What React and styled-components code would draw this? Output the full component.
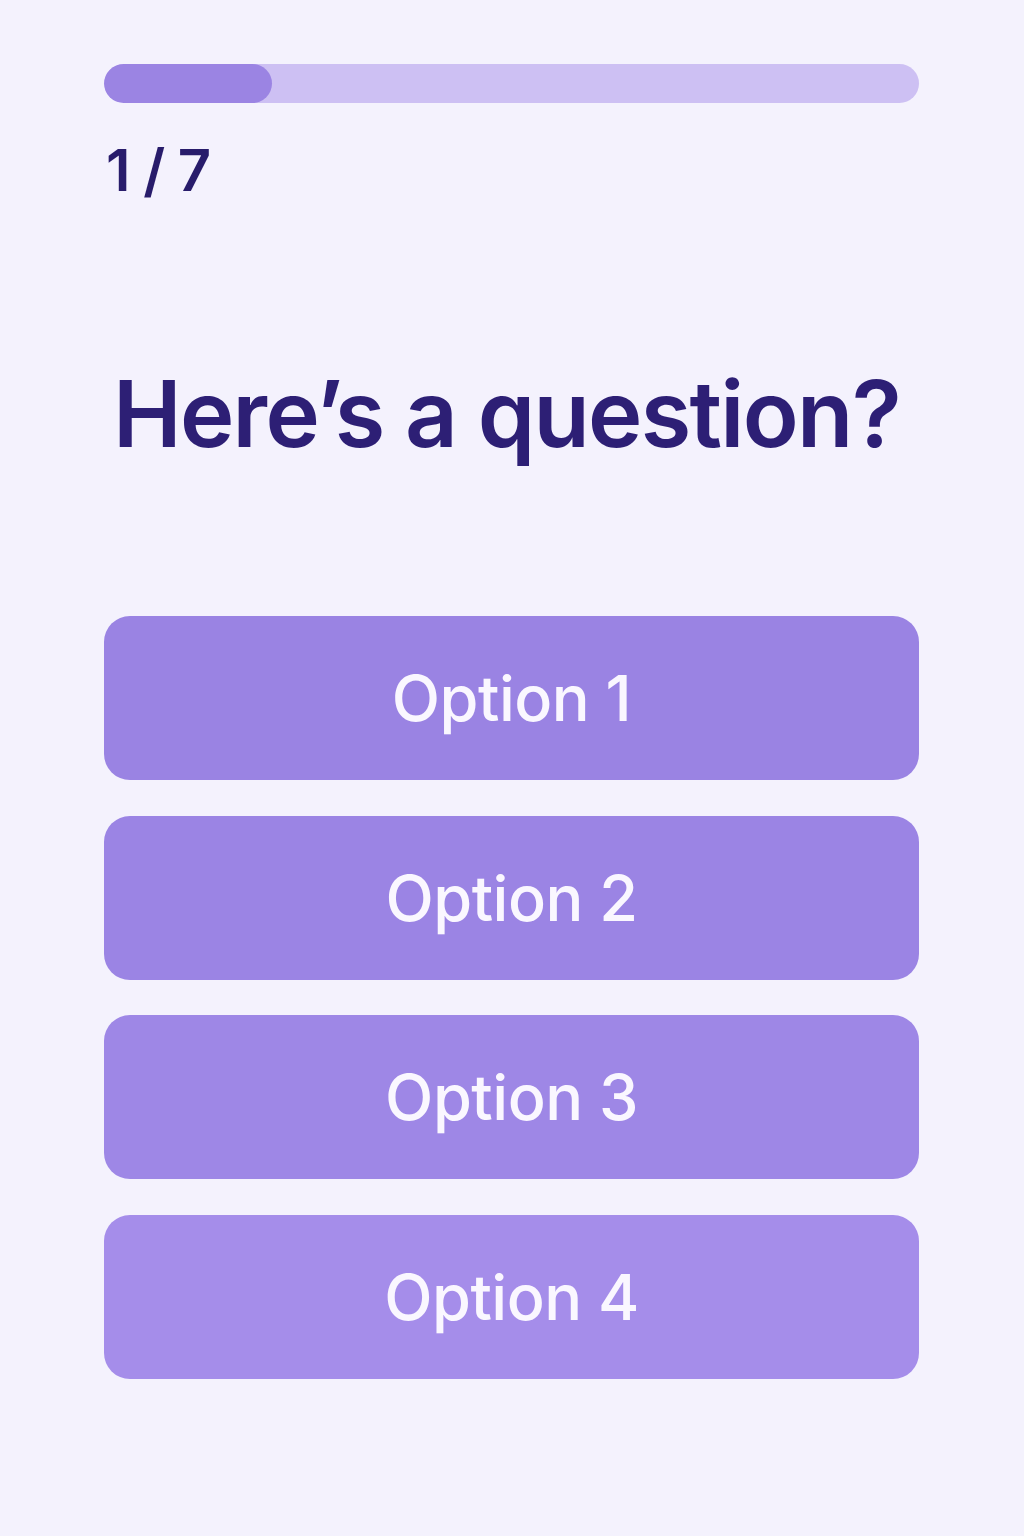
import React, { useState } from 'react';
import styled, { createGlobalStyle } from 'styled-components';

const GlobalStyle = createGlobalStyle`
  html, body {
    margin: 0;
    padding: 0;
    background: #f4f2fd;
  }
  body {
    font-family: Inter, "Noto Sans", "Liberation Sans", sans-serif;
  }
`;

const Page = styled.div`
  width: 1024px;
  min-height: 1536px;
  box-sizing: border-box;
  padding: 64px 105px 0 104px;
  display: flex;
  flex-direction: column;
`;

const Track = styled.div`
  height: 39px;
  border-radius: 20px;
  background: #cdc0f3;
  overflow: hidden;
`;

const Fill = styled.div`
  height: 100%;
  border-radius: 20px;
  background: #9b84e3;
`;

const Counter = styled.div`
  margin-top: 31px;
  padding-left: 2px;
  font-size: 58px;
  font-weight: 600;
  line-height: 72px;
  color: #281c6b;
  letter-spacing: -1px;
`;

const Question = styled.h1`
  margin: 153px 0 0 9px;
  font-size: 92px;
  font-weight: 600;
  line-height: 110px;
  color: #2d1f75;
  letter-spacing: -1.7px;
`;

const Options = styled.div`
  margin-top: 147px;
  display: flex;
  flex-direction: column;
  gap: 35.5px;
`;

const OptionButton = styled.button`
  height: 164px;
  border: none;
  border-radius: 26px;
  background: ${p => p.$tone};
  color: #faf7ff;
  font-family: inherit;
  font-size: 63px;
  font-weight: 500;
  letter-spacing: -0.5px;
  cursor: pointer;
  display: flex;
  align-items: center;
  justify-content: center;
  padding: 0;
  &:hover {
    filter: brightness(1.04);
  }
`;

const tones = ['#9a83e3', '#9b84e4', '#9e87e6', '#a58dea'];

export default function App() {
  const [step] = useState(1);
  const total = 7;
  const options = ['Option 1', 'Option 2', 'Option 3', 'Option 4'];

  return (
    <>
      <GlobalStyle />
      <Page>
        <Track>
          <Fill style={{ width: `${(168 / 815) * 100}%` }} />
        </Track>
        <Counter>{step} / {total}</Counter>
        <Question>Here’s a question?</Question>
        <Options>
          {options.map((o, i) => (
            <OptionButton key={o} $tone={tones[i]}>{o}</OptionButton>
          ))}
        </Options>
      </Page>
    </>
  );
}
